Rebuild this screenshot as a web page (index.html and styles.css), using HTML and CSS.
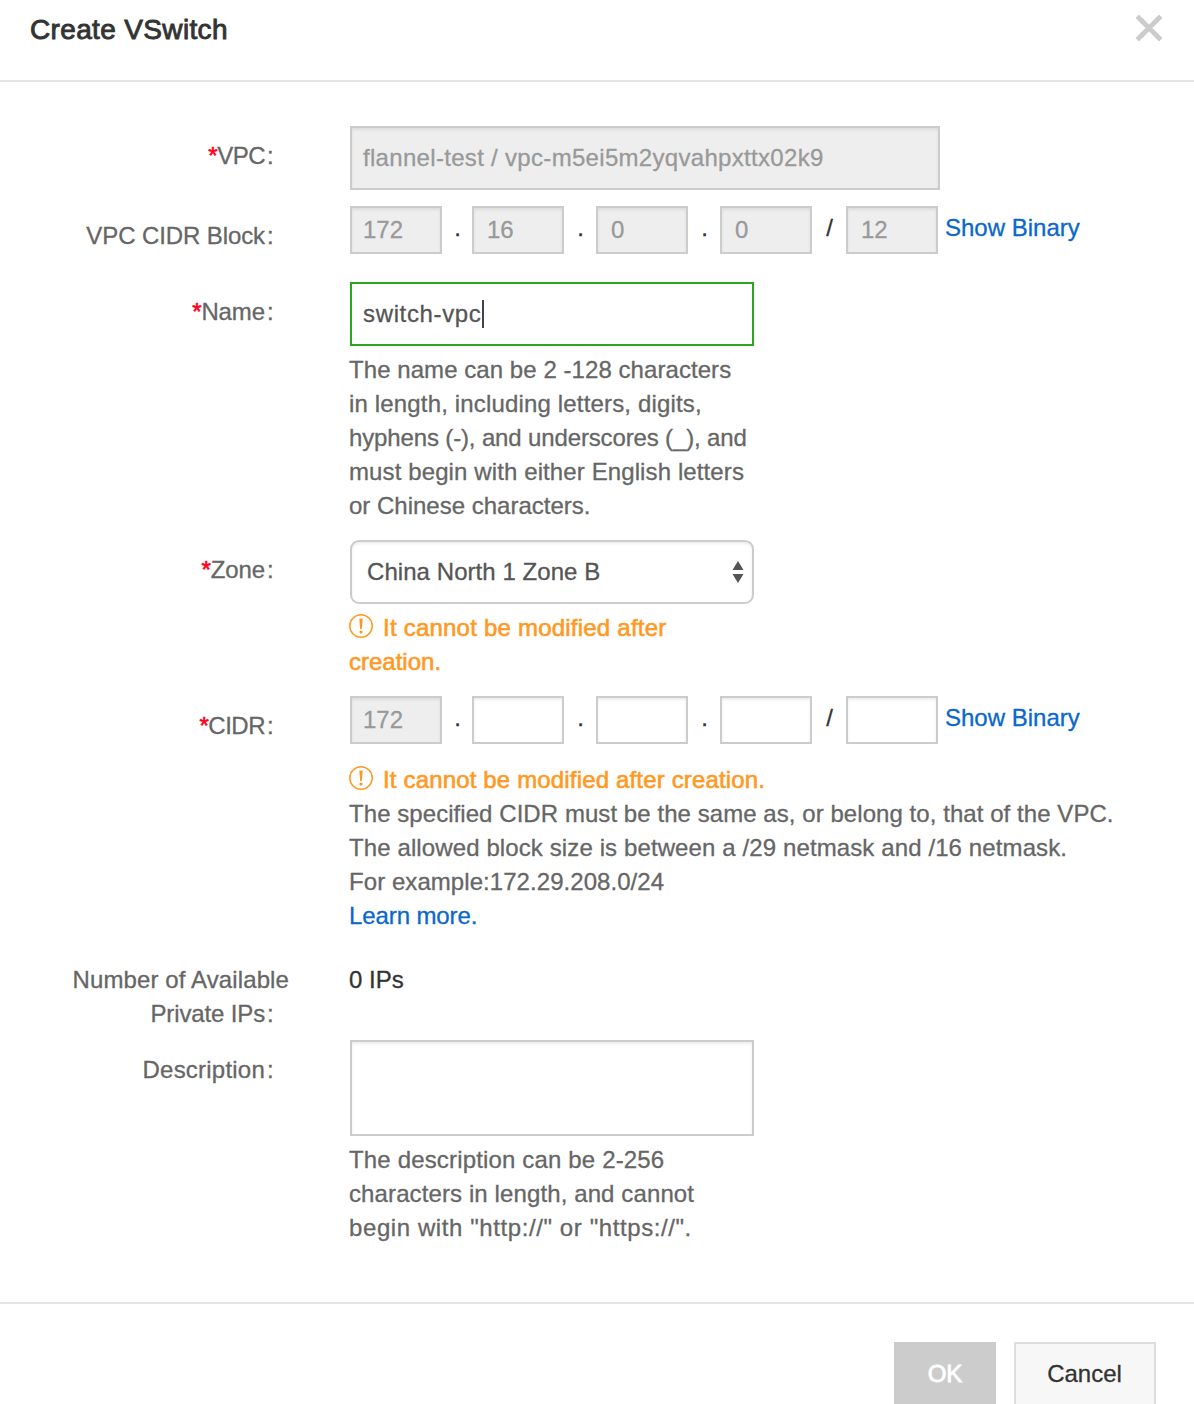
FILE: index.html
```html
<!DOCTYPE html>
<html lang="en">
<head>
<meta charset="utf-8">
<title>Create VSwitch</title>
<link rel="stylesheet" href="styles.css">
</head>
<body>
<div class="dialog">
  <header class="header">
    <h1 class="title">Create VSwitch</h1>
    <svg class="close" width="28" height="28" viewBox="0 0 28 28"><path d="M2.2 2.2L25.8 25.8M25.8 2.2L2.2 25.8" stroke="#ccc" stroke-width="4.8" fill="none"/></svg>
  </header>
  <main class="form">
    <div class="row row-vpc">
      <div class="label tight"><span class="star">*</span>VPC<span class="colon">:</span></div>
      <div class="control"><div class="field field-wide disabled"><span class="vpc-text">flannel-test / vpc-m5ei5m2yqvahpxttx02k9</span></div></div>
    </div>
    <div class="row row-block">
      <div class="label snug">VPC CIDR Block<span class="colon">:</span></div>
      <div class="control cidr">
        <div class="octet first disabled">172</div><span class="sep sep-first">.</span>
        <div class="octet disabled">16</div><span class="sep">.</span>
        <div class="octet disabled">0</div><span class="sep">.</span>
        <div class="octet disabled">0</div><span class="sep slash">/</span>
        <div class="octet disabled">12</div><a class="link binary">Show Binary</a>
      </div>
    </div>
    <div class="row row-name">
      <div class="label snug"><span class="star">*</span>Name<span class="colon">:</span></div>
      <div class="control">
        <div class="field focused"><span class="name-text">switch-vpc</span><span class="caret"></span></div>
        <p class="help"><span class="ls-1">The name can be 2 -128 characters</span><br><span class="ls-3">in length, including letters, digits,</span><br><span class="ls-neg">hyphens (-), and underscores (_), and</span><br><span class="ls-2">must begin with either English letters</span><br>or Chinese characters.</p>
      </div>
    </div>
    <div class="row row-zone">
      <div class="label snug"><span class="star">*</span>Zone<span class="colon">:</span></div>
      <div class="control">
        <div class="field select"><span class="ls-1">China North 1 Zone B</span>
          <svg class="arrows" width="12" height="22" viewBox="0 0 12 22"><path d="M6 0L11.5 9H.5zM6 22L.5 13H11.5z" fill="#555"/></svg>
        </div>
        <p class="help warn"><svg class="alert" width="24" height="24" viewBox="0 0 24 24"><circle cx="12" cy="12" r="11.2" fill="none" stroke="#ff9924" stroke-width="1.5"/><path d="M10.3 4.5H13.7L12.9 15H11.1zM10.6 16.7H13.4V19.4H10.6z" fill="#ff9924"/></svg><span class="ls-4">It cannot be modified after</span><br>creation.</p>
      </div>
    </div>
    <div class="row row-cidr">
      <div class="label tight"><span class="star">*</span>CIDR<span class="colon">:</span></div>
      <div class="control">
        <div class="cidr">
          <div class="octet first disabled">172</div><span class="sep sep-first">.</span>
          <div class="octet"></div><span class="sep">.</span>
          <div class="octet"></div><span class="sep">.</span>
          <div class="octet"></div><span class="sep slash">/</span>
          <div class="octet"></div><a class="link binary">Show Binary</a>
        </div>
        <div class="notes">
          <p class="help warn"><svg class="alert" width="24" height="24" viewBox="0 0 24 24"><circle cx="12" cy="12" r="11.2" fill="none" stroke="#ff9924" stroke-width="1.5"/><path d="M10.3 4.5H13.7L12.9 15H11.1zM10.6 16.7H13.4V19.4H10.6z" fill="#ff9924"/></svg><span class="ls-3">It cannot be modified after creation.</span></p>
          <p class="help"><span class="ls-1">The specified CIDR must be the same as, or belong to, that of the VPC.</span><br><span class="ls-2">The allowed block size is between a /29 netmask and /16 netmask.</span><br><span class="ls-1">For example:172.29.208.0/24</span><br><a class="link learn">Learn more.</a></p>
        </div>
      </div>
    </div>
    <div class="row row-ips">
      <div class="label"><span class="ls-2">Number of Available</span><br><span class="ls-neg">Private IPs</span><span class="colon">:</span></div>
      <div class="control ips">0 IPs</div>
    </div>
    <div class="row row-desc">
      <div class="label"><span class="ls-4">Description</span><span class="colon">:</span></div>
      <div class="control">
        <div class="field textarea"></div>
        <p class="help"><span class="ls-3">The description can be 2-256</span><br><span class="ls-2">characters in length, and cannot</span><br><span class="ls-wide">begin with "http://" or "https://".</span></p>
      </div>
    </div>
  </main>
  <footer class="footer">
    <div class="button ok">OK</div>
    <div class="button cancel">Cancel</div>
  </footer>
</div>
</body>
</html>
```
FILE: styles.css
```css
* { box-sizing: border-box; }
html { overflow: hidden; }
body {
  margin: 0;
  background: #fff;
  color: #333;
  font: 24px/34px "Liberation Sans", Arial, sans-serif;
  white-space: nowrap;
  -webkit-text-stroke: .3px;
}
.dialog { height: 1404px; overflow: hidden; display: flex; flex-direction: column; }
.header {
  height: 82px;
  flex: none;
  display: flex;
  justify-content: space-between;
  align-items: flex-start;
  padding: 14px 31px 0 30px;
  border-bottom: 2px solid #e4e4e4;
}
.title {
  margin: 0;
  font-size: 28px;
  font-weight: 400;
  line-height: 32px;
  letter-spacing: .35px;
  -webkit-text-stroke: .9px #333;
}
.close { -webkit-text-stroke: 0; }
.form { height: 1220px; flex: none; padding-top: 44px; display: flex; flex-direction: column; }
.row { display: flex; flex: none; }
.row-vpc { height: 80px; }
.row-block { height: 76px; }
.row-name { height: 258px; }
.row-zone { height: 156px; }
.row-cidr { height: 266px; }
.row-ips { height: 78px; }
.label {
  width: 289px;
  margin-right: 61px;
  padding-top: 13px;
  text-align: right;
  color: #666;
  flex: none;
}
.snug { letter-spacing: -.1px; }
.tight { letter-spacing: -.5px; }
.row-ips .label { padding-top: 1px; }
.star { color: #ff0020; -webkit-text-stroke: .6px; }
.colon { display: inline-block; width: 24px; padding-left: 2px; text-align: left; letter-spacing: 0; }
.ls-neg { letter-spacing: -.14px; }
.ls-1 { letter-spacing: .06px; }
.ls-2 { letter-spacing: .11px; }
.ls-3 { letter-spacing: .16px; }
.ls-4 { letter-spacing: .22px; }
.ls-wide { letter-spacing: .59px; }
.field {
  width: 404px;
  height: 64px;
  display: flex;
  align-items: center;
  padding: 0 11px;
  border: 2px solid #ccc;
  color: #555;
  box-shadow: inset 0 2px 3px rgba(0, 0, 0, .075);
}
.field-wide { width: 590px; }
.vpc-text { letter-spacing: .31px; }
.name-text { letter-spacing: .65px; }
.disabled { background: #eee; color: #999; }
.focused { border-color: #2ba71c; box-shadow: none; }
.caret { width: 2px; height: 28px; background: #444; }
.select { border-radius: 9px; padding: 0 8px 0 15px; justify-content: space-between; }
.textarea { height: 96px; }
.help { margin: 7px 0 0 -1px; color: #666; }
.warn { color: #ff9924; -webkit-text-stroke: .6px #ff9924; }
.alert { margin-right: 10px; vertical-align: -2px; }
.cidr { display: flex; height: 48px; }
.octet {
  width: 92px;
  height: 48px;
  flex: none;
  padding-left: 13px;
  border: 2px solid #ccc;
  line-height: 44px;
  box-shadow: inset 0 2px 3px rgba(0, 0, 0, .075);
}
.first { padding-left: 11px; }
.sep { width: 32px; padding: 5px 0 0 1px; text-align: center; }
.sep-first { width: 30px; }
.slash { width: 34px; }
.link { color: #0a67cc; }
.learn { letter-spacing: -.1px; }
.binary { margin-left: 7px; padding-top: 5px; }
.notes { margin-top: 19px; }
.notes .help { margin-top: 0; }
.ips { margin-left: -1px; padding-top: 1px; }
.footer {
  flex: none;
  display: flex;
  justify-content: flex-end;
  gap: 18px;
  padding: 38px 38px 0 0;
  border-top: 2px solid #e4e4e4;
}
.button { height: 64px; line-height: 60px; text-align: center; border: 2px solid #ddd; background: #f7f7f7; }
.ok { width: 102px; color: #fff; background: #ccc; border-color: #ccc; -webkit-text-stroke: .8px #fff; }
.cancel { width: 142px; padding-right: 1px; }
```
